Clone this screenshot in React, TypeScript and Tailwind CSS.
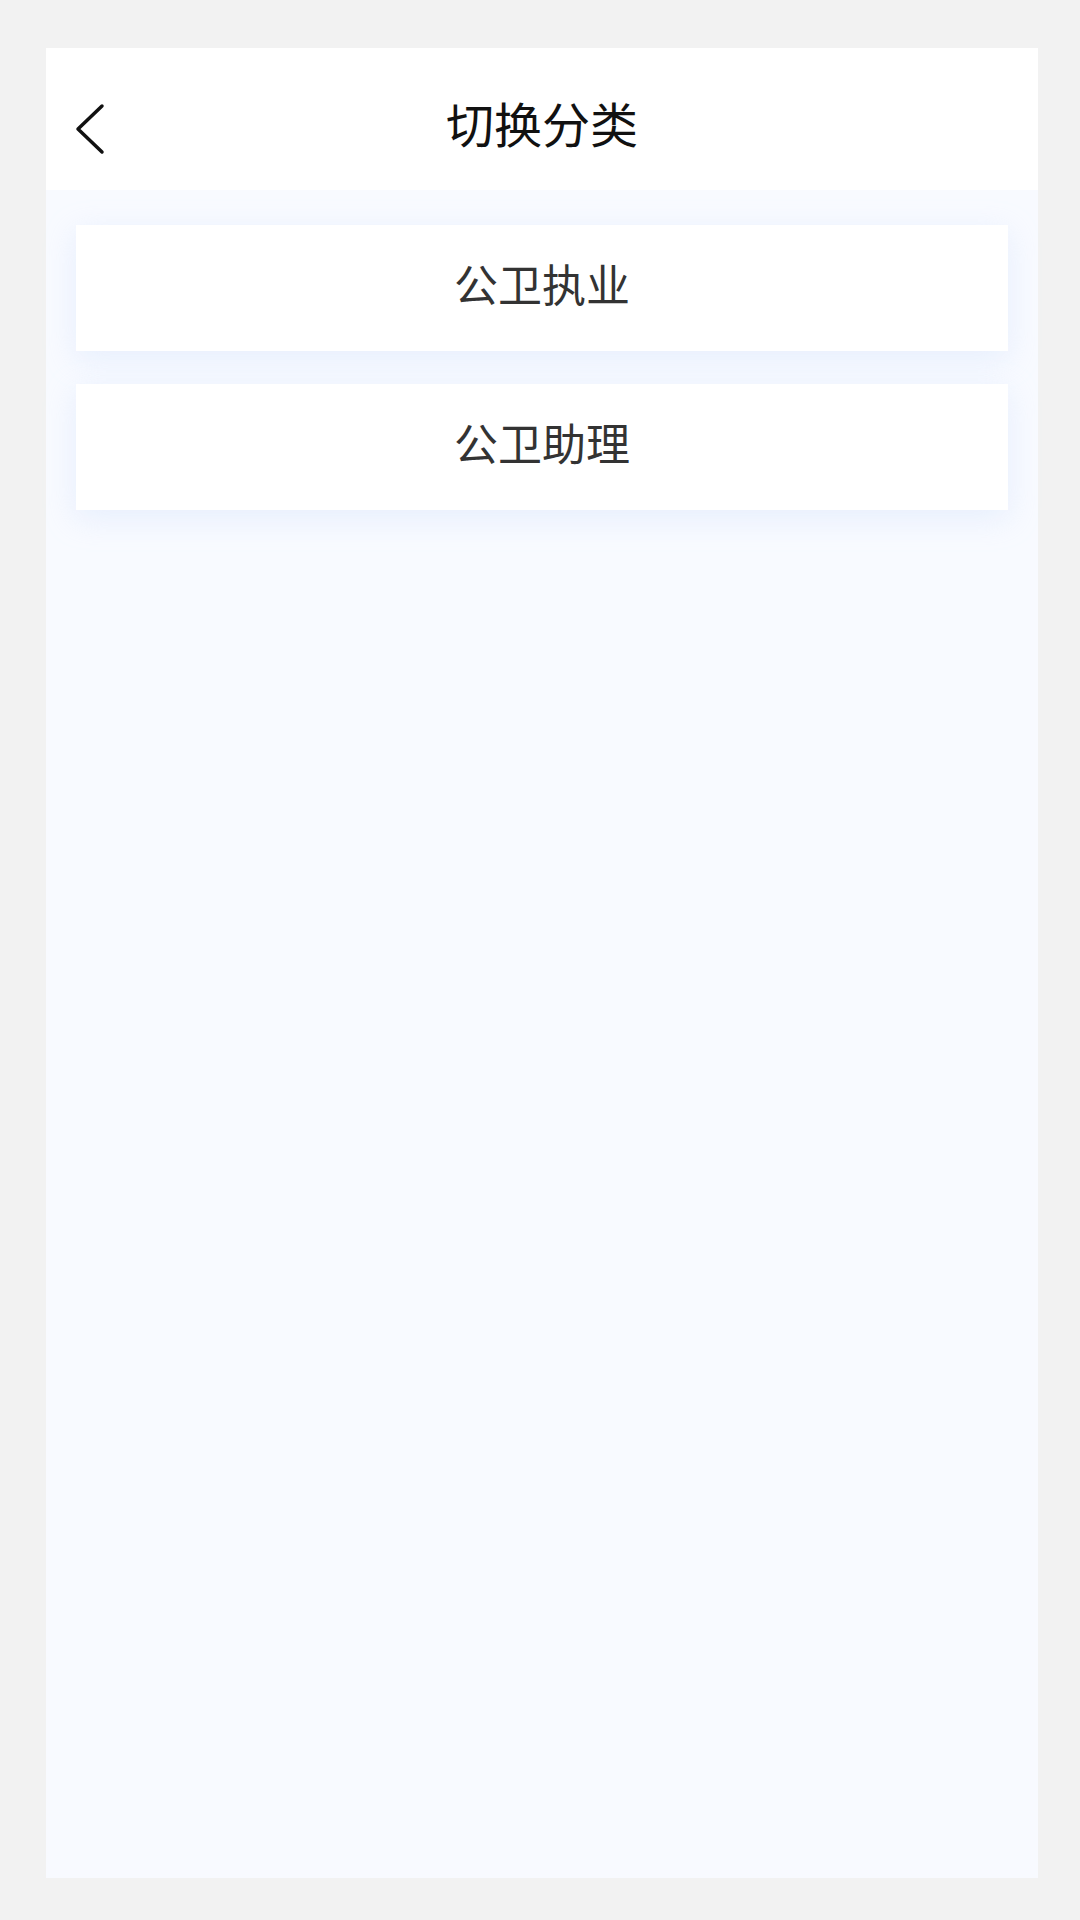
import React from "react";

const items = ["公卫执业", "公卫助理"];

// Back chevron
const BackIcon = () => (
  <svg width="30" height="52" viewBox="0 0 30 52" fill="none">
    <path d="M27 3 L3 26 L27 49" stroke="#111" strokeWidth="3.5" strokeLinecap="round" strokeLinejoin="round" />
  </svg>
);

export default function App() {
  return (
    <div
      className="w-[1080px] h-[1920px] bg-[#f2f2f2] pl-[46px] pr-[42px] pt-[48px] pb-[42px] flex flex-col"
      style={{ fontFamily: '"Noto Sans CJK SC", "Noto Sans", sans-serif' }}
    >
      <div className="flex-1 flex flex-col bg-[#f8faff]">
        {/* Header */}
        <div className="relative h-[142px] bg-white flex items-center justify-center pt-[6px]">
          <button className="absolute left-[29px] top-[55px]">
            <BackIcon />
          </button>
          <h1 className="text-[48px] leading-none text-[#111]">切换分类</h1>
        </div>

        {/* List */}
        <div className="flex flex-col gap-[33px] px-[30px] pt-[35px]">
          {items.map((label) => (
            <div
              key={label}
              className="h-[126px] bg-white flex items-center justify-center pb-[10px] shadow-[0_8px_28px_rgba(205,222,250,0.4)]"
            >
              <span className="text-[44px] leading-none text-[#333]">{label}</span>
            </div>
          ))}
        </div>
      </div>
    </div>
  );
}
